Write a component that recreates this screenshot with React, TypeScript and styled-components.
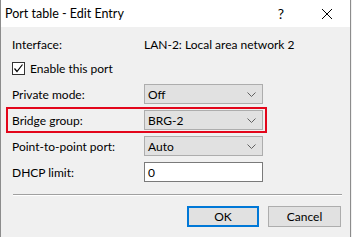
import React from 'react'
import styled, { createGlobalStyle } from 'styled-components'

const GlobalStyle = createGlobalStyle`
  html, body {
    margin: 0;
    padding: 0;
    background: #f0f0f0;
  }
  body {
    font-family: Lato, 'Liberation Sans', sans-serif;
    font-size: 12px;
    color: #000;
  }
`

const Window = styled.div`
  width: 351px;
  height: 237px;
  box-sizing: border-box;
  border-left: 1px solid #8c8c8c;
  border-right: 1px solid #8c8c8c;
  display: flex;
  flex-flow: column nowrap;
  background: #f0f0f0;
  overflow: hidden;
`

const TitleBar = styled.div`
  height: 27px;
  background: #ffffff;
  display: flex;
  flex-flow: row nowrap;
  align-items: center;
  padding-left: 4px;
  flex-shrink: 0;
`

const Title = styled.div`
  flex: 1;
  font-size: 12.5px;
  color: #000;
`

const TitleButton = styled.div`
  width: 46px;
  height: 27px;
  display: flex;
  align-items: center;
  justify-content: center;
  font-size: 14px;
  color: #000;
`

const Body = styled.div`
  padding: 8px 9px 0 11px;
  display: flex;
  flex-flow: column nowrap;
`

const Form = styled.div`
  display: grid;
  grid-template-columns: 132px 119px;
  grid-template-rows: 18px 19px 20px 20px 20px 20px;
  row-gap: 6px;
  align-items: center;
`

const Row = styled.div`
  display: contents;
`

const Highlight = styled.div`
  grid-column: 1 / span 2;
  display: grid;
  grid-template-columns: 132px 119px;
  align-items: center;
  height: 20px;
  position: relative;
  &::after {
    content: '';
    position: absolute;
    left: -6px;
    right: -4px;
    top: -3px;
    bottom: -3px;
    border: 2px solid #e3061b;
    pointer-events: none;
  }
`

const Label = styled.div`
  white-space: nowrap;
`

const Value = styled.div`
  white-space: nowrap;
`

const CheckRow = styled.label`
  grid-column: 1 / span 2;
  display: flex;
  align-items: center;
  gap: 5px;
`

const CheckBox = styled.span`
  width: 11px;
  height: 11px;
  border: 1px solid #333;
  background: #fff;
  display: flex;
  align-items: center;
  justify-content: center;
`

const Select = styled.div`
  height: 20px;
  box-sizing: border-box;
  border: 1px solid #adadad;
  background: #e1e1e1;
  display: flex;
  align-items: center;
  padding: 0 6px 0 3px;
  justify-content: space-between;
`

const Input = styled.div`
  height: 20px;
  box-sizing: border-box;
  border: 1px solid #7a7a7a;
  background: #fff;
  display: flex;
  align-items: center;
  padding-left: 3px;
`

const Separator = styled.div`
  margin-top: 12px;
  margin-left: 1px;
  height: 1px;
  background: #a0a0a0;
  border-bottom: 1px solid #fff;
  width: 329px;
`

const Buttons = styled.div`
  display: flex;
  justify-content: flex-end;
  gap: 9px;
  margin-top: 10px;
`

const Button = styled.div<{ $default?: boolean }>`
  width: ${p => (p.$default ? '72px' : '73px')};
  height: 21px;
  box-sizing: border-box;
  background: #e1e1e1;
  border: ${p => (p.$default ? '2px solid #0078d7' : '1px solid #adadad')};
  display: flex;
  align-items: center;
  justify-content: center;
`

const Chevron = () => (
  <svg width="9" height="5" viewBox="0 0 9 5">
    <path d="M0.5 0.5 L4.5 4.5 L8.5 0.5" stroke="#606060" strokeWidth="1" fill="none" />
  </svg>
)

const CloseIcon = () => (
  <svg width="10" height="10" viewBox="0 0 10 10">
    <path d="M0 0 L10 10 M10 0 L0 10" stroke="#000" strokeWidth="1" />
  </svg>
)

const CheckMark = () => (
  <svg width="11" height="11" viewBox="0 0 11 11">
    <path d="M1.5 5.5 L4 8.5 L9.5 1.5" stroke="#000" strokeWidth="1.2" fill="none" />
  </svg>
)

const selects = [
  { label: 'Private mode:', value: 'Off' },
  { label: 'Bridge group:', value: 'BRG-2', highlight: true },
  { label: 'Point-to-point port:', value: 'Auto' },
]

const App = () => {
  return (
    <>
      <GlobalStyle />
      <Window>
        <TitleBar>
          <Title>Port table - Edit Entry</Title>
          <TitleButton>?</TitleButton>
          <TitleButton>
            <CloseIcon />
          </TitleButton>
        </TitleBar>
        <Body>
          <Form>
            <Label>Interface:</Label>
            <Value>LAN-2: Local area network 2</Value>
            <CheckRow>
              <CheckBox>
                <CheckMark />
              </CheckBox>
              Enable this port
            </CheckRow>
            {selects.map((s, i) =>
              s.highlight ? (
                <Highlight key={i}>
                  <Label>{s.label}</Label>
                  <Select>
                    {s.value}
                    <Chevron />
                  </Select>
                </Highlight>
              ) : (
                <Row key={i}>
                  <Label>{s.label}</Label>
                  <Select>
                    {s.value}
                    <Chevron />
                  </Select>
                </Row>
              )
            )}
            <Label>DHCP limit:</Label>
            <Input>0</Input>
          </Form>
          <Separator />
          <Buttons>
            <Button $default>OK</Button>
            <Button>Cancel</Button>
          </Buttons>
        </Body>
      </Window>
    </>
  )
}

export default App
